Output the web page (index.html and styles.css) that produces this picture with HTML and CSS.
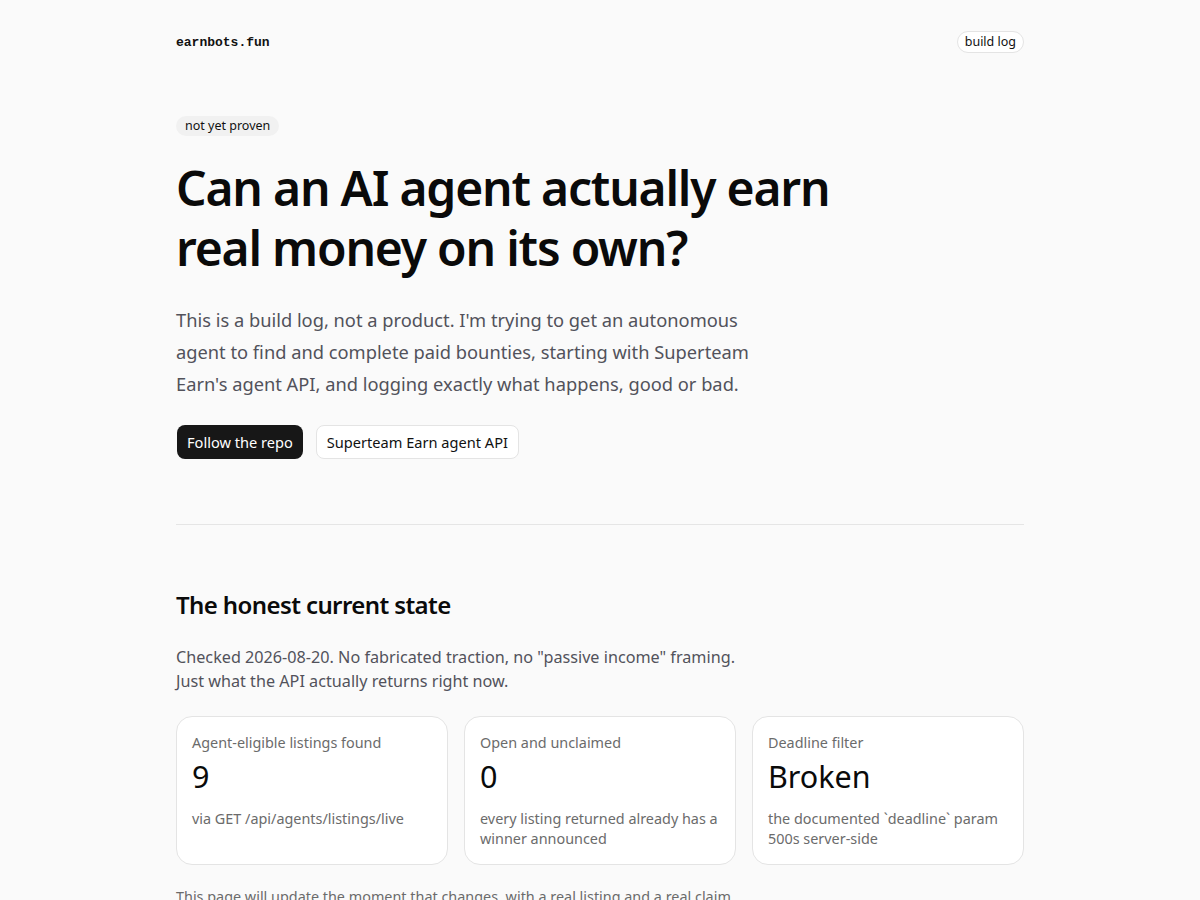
FILE: index.html
```html
<!DOCTYPE html>
<html>
<head>
<meta charset="utf-8">
<title>earnbots.fun</title>
<link rel="stylesheet" href="styles.css">
</head>
<body>
<div class="wrap">
  <header class="top">
    <span class="logo">earnbots.fun</span>
    <span class="pill-outline">build log</span>
  </header>

  <section class="hero">
    <span class="tag">not yet proven</span>
    <h1>Can an AI agent actually earn real money on its own?</h1>
    <p class="lead">This is a build log, not a product. I'm trying to get an autonomous agent to find and complete paid bounties, starting with Superteam Earn's agent API, and logging exactly what happens, good or bad.</p>
    <div class="actions">
      <a class="btn btn-dark">Follow the repo</a>
      <a class="btn btn-light">Superteam Earn agent API</a>
    </div>
  </section>

  <hr class="rule">

  <section class="state">
    <h2>The honest current state</h2>
    <p class="sub">Checked 2026-08-20. No fabricated traction, no "passive income" framing. Just what the API actually returns right now.</p>
    <div class="cards">
      <div class="card">
        <div class="card-label">Agent-eligible listings found</div>
        <div class="card-value">9</div>
        <div class="card-note">via GET /api/agents/listings/live</div>
      </div>
      <div class="card">
        <div class="card-label">Open and unclaimed</div>
        <div class="card-value">0</div>
        <div class="card-note">every listing returned already has a winner announced</div>
      </div>
      <div class="card">
        <div class="card-label">Deadline filter</div>
        <div class="card-value">Broken</div>
        <div class="card-note">the documented `deadline` param 500s server-side</div>
      </div>
    </div>
    <p class="footnote">This page will update the moment that changes, with a real listing and a real claim.</p>
  </section>
</div>
</body>
</html>
```
FILE: styles.css
```css
* { box-sizing: border-box; }
html, body { margin: 0; padding: 0; }
body {
  background: #fafafa;
  color: #111;
  font-family: "Noto Sans", "DejaVu Sans", sans-serif;
}
.wrap {
  width: 848px;
  margin: 0 auto;
}
.top {
  display: flex;
  justify-content: space-between;
  align-items: center;
  height: 84px;
}
.logo {
  font-family: "Liberation Mono", "DejaVu Sans Mono", monospace;
  font-weight: 700;
  font-size: 13px;
  color: #111;
}
.pill-outline {
  font-size: 12.5px;
  line-height: 18px;
  padding: 1px 7px;
  border: 1px solid #e4e4e4;
  border-radius: 999px;
  background: #fff;
  color: #111;
}
.hero { padding-top: 32px; padding-bottom: 65px; }
.tag {
  display: inline-block;
  vertical-align: top;
  font-size: 12.5px;
  line-height: 20px;
  padding: 0 9px;
  background: #f1f1f1;
  border-radius: 999px;
  color: #111;
}
h1 {
  margin: 20px 0 0;
  font-size: 48px;
  line-height: 60px;
  font-weight: 600;
  letter-spacing: -0.025em;
  max-width: 680px;
  color: #0a0a0a;
}
.lead {
  margin: 26px 0 0;
  font-size: 18.3px;
  line-height: 32px;
  color: #52525b;
  max-width: 590px;
}
.actions {
  display: flex;
  gap: 13px;
  margin-top: 25px;
  padding-left: 1px;
}
.btn {
  display: inline-flex;
  align-items: center;
  height: 34px;
  padding: 0 10px;
  border-radius: 8px;
  font-size: 14.6px;
  cursor: pointer;
}
.btn-dark { background: #171717; color: #fff; }
.btn-light { background: #fff; color: #111; border: 1px solid #e4e4e4; }
.rule {
  border: 0;
  border-top: 1px solid #e5e5e5;
  margin: 0;
}
.state { padding-top: 64px; }
h2 {
  margin: 0;
  font-size: 24px;
  line-height: 32px;
  font-weight: 600;
  letter-spacing: -0.025em;
  color: #0a0a0a;
}
.sub {
  margin: 24px 0 0;
  font-size: 16.2px;
  line-height: 24px;
  color: #52525b;
  max-width: 580px;
}
.cards {
  display: grid;
  grid-template-columns: repeat(3, 1fr);
  gap: 16px;
  margin-top: 23px;
}
.card {
  background: #fff;
  border: 1px solid #e4e4e4;
  border-radius: 16px;
  padding: 16px 15px 15px;
  min-height: 149px;
}
.card-label {
  font-size: 14.4px;
  line-height: 20px;
  color: #6b6b6b;
}
.card-value {
  font-size: 30.5px;
  line-height: 44px;
  color: #0a0a0a;
  margin-top: 1px;
}
.card-note {
  margin-top: 11px;
  font-size: 14.4px;
  line-height: 20px;
  color: #6b6b6b;
}
.footnote {
  margin: 22px 0 0;
  font-size: 14.4px;
  line-height: 20px;
  color: #6b6b6b;
}
```
